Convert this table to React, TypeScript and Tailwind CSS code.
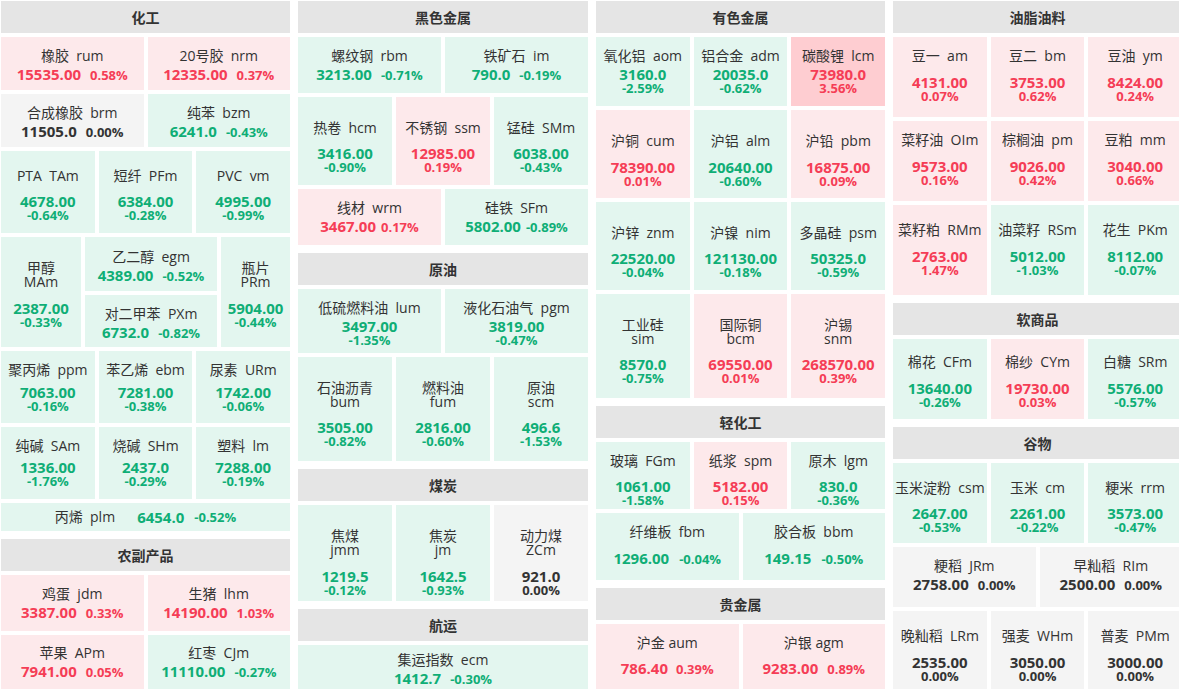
import React from "react";

type Tone = "up" | "down" | "flat" | "hot";
type Variant = "inline" | "stack" | "two" | "row";

interface Quote {
  cn: string;
  code: string;
  price: string;
  pct: string;
  tone: Tone;
  v: Variant;
  pt: string;
  mt?: string;
  gap?: string;
  sp?: string;
  w?: string;
}

interface Row {
  h: string;
  items: Quote[];
}

interface Section {
  title: string;
  rows: Row[];
}

const BG: Record<Tone, string> = {
  up: "bg-[#fde9eb]",
  down: "bg-[#e3f6ef]",
  flat: "bg-[#f4f4f4]",
  hot: "bg-[#fecdd1]",
};

const FG: Record<Tone, string> = {
  up: "text-[#f53d56]",
  down: "text-[#0fae76]",
  flat: "text-[#333]",
  hot: "text-[#f53d56]",
};

function q(
  cn: string,
  code: string,
  price: string,
  pct: string,
  tone: Tone,
  v: Variant,
  pt: string,
  mt = "",
  extra: Partial<Quote> = {}
): Quote {
  return { cn, code, price, pct, tone, v, pt, mt, ...extra };
}

function Tile({ t, className = "" }: { t: Quote; className?: string }) {
  const bg = BG[t.tone];
  const fg = FG[t.tone];
  const label = t.cn + (t.sp ?? "  ") + t.code;

  if (t.v === "row") {
    return (
      <div className={`flex items-center justify-center ${bg} ${className}`}>
        <span className="text-[14px] leading-[20px] text-[#333] whitespace-pre">{label}</span>
        <span className={`ml-[22px] text-[15px] leading-[16px] font-bold ${fg}`}>{t.price}</span>
        <span className={`ml-[10px] text-[13px] leading-[13px] font-bold ${fg}`}>{t.pct}</span>
      </div>
    );
  }

  return (
    <div className={`flex flex-col items-center text-center min-w-0 ${bg} ${t.pt} ${t.w ?? "flex-1"} ${className}`}>
      {t.v === "two" ? (
        <div className="text-[14px] leading-[14px] text-[#333] whitespace-nowrap">
          <div>{t.cn}</div>
          <div>{t.code}</div>
        </div>
      ) : (
        <div className="text-[14px] leading-[20px] text-[#333] whitespace-pre">{label}</div>
      )}
      {t.v === "inline" ? (
        <div className={`flex items-baseline whitespace-nowrap ${t.mt}`}>
          <span className={`text-[15px] leading-[16px] font-bold ${fg}`}>{t.price}</span>
          <span className={`text-[13px] leading-[13px] font-bold ${fg} ${t.gap ?? "ml-[9px]"}`}>{t.pct}</span>
        </div>
      ) : (
        <div className={`flex flex-col items-center whitespace-nowrap ${t.mt}`}>
          <span className={`text-[15px] leading-[16px] font-bold ${fg}`}>{t.price}</span>
          <span className={`text-[13px] leading-[13px] font-bold ${fg}`}>{t.pct}</span>
        </div>
      )}
    </div>
  );
}

function Header({ title }: { title: string }) {
  return (
    <div className="h-[32px] shrink-0 flex items-center justify-center bg-[#e5e5e5] text-[14px] font-bold text-[#333]">
      {title}
    </div>
  );
}

function Rows({ rows }: { rows: Row[] }) {
  return (
    <>
      {rows.map((r, i) => (
        <div key={i} className={`flex gap-1 shrink-0 ${r.h}`}>
          {r.items.map((t) => (
            <Tile key={t.code} t={t} />
          ))}
        </div>
      ))}
    </>
  );
}

function Block({ s, children }: { s: Section; children?: React.ReactNode }) {
  return (
    <div className="flex flex-col gap-1">
      <Header title={s.title} />
      <Rows rows={s.rows} />
      {children}
    </div>
  );
}

const chemTop: Row[] = [
  {
    h: "h-[53px]",
    items: [
      q("橡胶", "rum", "15535.00", "0.58%", "up", "inline", "pt-[9px]"),
      q("20号胶", "nrm", "12335.00", "0.37%", "up", "inline", "pt-[9px]"),
    ],
  },
  {
    h: "h-[53px]",
    items: [
      q("合成橡胶", "brm", "11505.0", "0.00%", "flat", "inline", "pt-[9px]"),
      q("纯苯", "bzm", "6241.0", "-0.43%", "down", "inline", "pt-[9px]"),
    ],
  },
  {
    h: "h-[82px]",
    items: [
      q("PTA", "TAm", "4678.00", "-0.64%", "down", "stack", "pt-[15px]", "mt-[7px]"),
      q("短纤", "PFm", "6384.00", "-0.28%", "down", "stack", "pt-[15px]", "mt-[7px]"),
      q("PVC", "vm", "4995.00", "-0.99%", "down", "stack", "pt-[15px]", "mt-[7px]"),
    ],
  },
];

const chemBottom: Row[] = [
  {
    h: "h-[72px]",
    items: [
      q("聚丙烯", "ppm", "7063.00", "-0.16%", "down", "stack", "pt-[9px]", "mt-[4px]"),
      q("苯乙烯", "ebm", "7281.00", "-0.38%", "down", "stack", "pt-[9px]", "mt-[4px]"),
      q("尿素", "URm", "1742.00", "-0.06%", "down", "stack", "pt-[9px]", "mt-[4px]"),
    ],
  },
  {
    h: "h-[72px]",
    items: [
      q("纯碱", "SAm", "1336.00", "-1.76%", "down", "stack", "pt-[9px]", "mt-[3px]"),
      q("烧碱", "SHm", "2437.0", "-0.29%", "down", "stack", "pt-[9px]", "mt-[3px]"),
      q("塑料", "lm", "7288.00", "-0.19%", "down", "stack", "pt-[9px]", "mt-[3px]"),
    ],
  },
];

const agri: Section = {
  title: "农副产品",
  rows: [
    {
      h: "h-[56px]",
      items: [
        q("鸡蛋", "jdm", "3387.00", "0.33%", "up", "inline", "pt-[9px]"),
        q("生猪", "lhm", "14190.00", "1.03%", "up", "inline", "pt-[9px]"),
      ],
    },
    {
      h: "h-[56px]",
      items: [
        q("苹果", "APm", "7941.00", "0.05%", "up", "inline", "pt-[8px]"),
        q("红枣", "CJm", "11110.00", "-0.27%", "down", "inline", "pt-[8px]"),
      ],
    },
  ],
};

const col2: Section[] = [
  {
    title: "黑色金属",
    rows: [
      {
        h: "h-[56px]",
        items: [
          q("螺纹钢", "rbm", "3213.00", "-0.71%", "down", "inline", "pt-[9px]"),
          q("铁矿石", "im", "790.0", "-0.19%", "down", "inline", "pt-[9px]"),
        ],
      },
      {
        h: "h-[88px]",
        items: [
          q("热卷", "hcm", "3416.00", "-0.90%", "down", "stack", "pt-[21px]", "mt-[7px]"),
          q("不锈钢", "ssm", "12985.00", "0.19%", "up", "stack", "pt-[21px]", "mt-[7px]"),
          q("锰硅", "SMm", "6038.00", "-0.43%", "down", "stack", "pt-[21px]", "mt-[7px]"),
        ],
      },
      {
        h: "h-[56px]",
        items: [
          q("线材", "wrm", "3467.00", "0.17%", "up", "inline", "pt-[9px]", "", { gap: "ml-[5px]" }),
          q("硅铁", "SFm", "5802.00", "-0.89%", "down", "inline", "pt-[9px]", "", { gap: "ml-[5px]" }),
        ],
      },
    ],
  },
  {
    title: "原油",
    rows: [
      {
        h: "h-[64px]",
        items: [
          q("低硫燃料油", "lum", "3497.00", "-1.35%", "down", "stack", "pt-[9px]"),
          q("液化石油气", "pgm", "3819.00", "-0.47%", "down", "stack", "pt-[9px]"),
        ],
      },
      {
        h: "h-[104px]",
        items: [
          q("石油沥青", "bum", "3505.00", "-0.82%", "down", "two", "pt-[24px]", "mt-[10px]"),
          q("燃料油", "fum", "2816.00", "-0.60%", "down", "two", "pt-[24px]", "mt-[10px]"),
          q("原油", "scm", "496.6", "-1.53%", "down", "two", "pt-[24px]", "mt-[10px]"),
        ],
      },
    ],
  },
  {
    title: "煤炭",
    rows: [
      {
        h: "h-[96px]",
        items: [
          q("焦煤", "jmm", "1219.5", "-0.12%", "down", "two", "pt-[24px]", "mt-[11px]"),
          q("焦炭", "jm", "1642.5", "-0.93%", "down", "two", "pt-[24px]", "mt-[11px]"),
          q("动力煤", "ZCm", "921.0", "0.00%", "flat", "two", "pt-[24px]", "mt-[11px]"),
        ],
      },
    ],
  },
  {
    title: "航运",
    rows: [
      {
        h: "h-[48px]",
        items: [q("集运指数", "ecm", "1412.7", "-0.30%", "down", "inline", "pt-[5px]")],
      },
    ],
  },
];

const col3: Section[] = [
  {
    title: "有色金属",
    rows: [
      {
        h: "h-[69px]",
        items: [
          q("氧化铝", "aom", "3160.0", "-2.59%", "down", "stack", "pt-[9px]"),
          q("铝合金", "adm", "20035.0", "-0.62%", "down", "stack", "pt-[9px]"),
          q("碳酸锂", "lcm", "73980.0", "3.56%", "hot", "stack", "pt-[9px]"),
        ],
      },
      {
        h: "h-[88px]",
        items: [
          q("沪铜", "cum", "78390.00", "0.01%", "up", "stack", "pt-[21px]", "mt-[8px]"),
          q("沪铝", "alm", "20640.00", "-0.60%", "down", "stack", "pt-[21px]", "mt-[8px]"),
          q("沪铅", "pbm", "16875.00", "0.09%", "up", "stack", "pt-[21px]", "mt-[8px]"),
        ],
      },
      {
        h: "h-[88px]",
        items: [
          q("沪锌", "znm", "22520.00", "-0.04%", "down", "stack", "pt-[21px]", "mt-[7px]"),
          q("沪镍", "nim", "121130.00", "-0.18%", "down", "stack", "pt-[21px]", "mt-[7px]"),
          q("多晶硅", "psm", "50325.0", "-0.59%", "down", "stack", "pt-[21px]", "mt-[7px]"),
        ],
      },
      {
        h: "h-[104px]",
        items: [
          q("工业硅", "sim", "8570.0", "-0.75%", "down", "two", "pt-[24px]", "mt-[10px]"),
          q("国际铜", "bcm", "69550.00", "0.01%", "up", "two", "pt-[24px]", "mt-[10px]"),
          q("沪锡", "snm", "268570.00", "0.39%", "up", "two", "pt-[24px]", "mt-[10px]"),
        ],
      },
    ],
  },
  {
    title: "轻化工",
    rows: [
      {
        h: "h-[67px]",
        items: [
          q("玻璃", "FGm", "1061.00", "-1.58%", "down", "stack", "pt-[9px]", "mt-[7px]"),
          q("纸浆", "spm", "5182.00", "0.15%", "up", "stack", "pt-[9px]", "mt-[7px]"),
          q("原木", "lgm", "830.0", "-0.36%", "down", "stack", "pt-[9px]", "mt-[7px]"),
        ],
      },
      {
        h: "h-[67px]",
        items: [
          q("纤维板", "fbm", "1296.00", "-0.04%", "down", "inline", "pt-[9px]", "mt-[8px]", { gap: "ml-[10px]" }),
          q("胶合板", "bbm", "149.15", "-0.50%", "down", "inline", "pt-[9px]", "mt-[8px]", { gap: "ml-[10px]" }),
        ],
      },
    ],
  },
  {
    title: "贵金属",
    rows: [
      {
        h: "h-[66px]",
        items: [
          q("沪金", "aum", "786.40", "0.39%", "up", "inline", "pt-[9px]", "mt-[7px]", { sp: " ", gap: "ml-[8px]" }),
          q("沪银", "agm", "9283.00", "0.89%", "up", "inline", "pt-[9px]", "mt-[7px]", { sp: " " }),
        ],
      },
    ],
  },
];

const col4: Section[] = [
  {
    title: "油脂油料",
    rows: [
      {
        h: "h-[80px]",
        items: [
          q("豆一", "am", "4131.00", "0.07%", "up", "stack", "pt-[9px]", "mt-[8px]"),
          q("豆二", "bm", "3753.00", "0.62%", "up", "stack", "pt-[9px]", "mt-[8px]"),
          q("豆油", "ym", "8424.00", "0.24%", "up", "stack", "pt-[9px]", "mt-[8px]"),
        ],
      },
      {
        h: "h-[80px]",
        items: [
          q("菜籽油", "OIm", "9573.00", "0.16%", "up", "stack", "pt-[9px]", "mt-[8px]"),
          q("棕榈油", "pm", "9026.00", "0.42%", "up", "stack", "pt-[9px]", "mt-[8px]"),
          q("豆粕", "mm", "3040.00", "0.66%", "up", "stack", "pt-[9px]", "mt-[8px]"),
        ],
      },
      {
        h: "h-[90px]",
        items: [
          q("菜籽粕", "RMm", "2763.00", "1.47%", "up", "stack", "pt-[15px]", "mt-[8px]"),
          q("油菜籽", "RSm", "5012.00", "-1.03%", "down", "stack", "pt-[15px]", "mt-[8px]"),
          q("花生", "PKm", "8112.00", "-0.07%", "down", "stack", "pt-[15px]", "mt-[8px]"),
        ],
      },
    ],
  },
  {
    title: "软商品",
    rows: [
      {
        h: "h-[80px]",
        items: [
          q("棉花", "CFm", "13640.00", "-0.26%", "down", "stack", "pt-[13px]", "mt-[8px]"),
          q("棉纱", "CYm", "19730.00", "0.03%", "up", "stack", "pt-[13px]", "mt-[8px]"),
          q("白糖", "SRm", "5576.00", "-0.57%", "down", "stack", "pt-[13px]", "mt-[8px]"),
        ],
      },
    ],
  },
  {
    title: "谷物",
    rows: [
      {
        h: "h-[80px]",
        items: [
          q("玉米淀粉", "csm", "2647.00", "-0.53%", "down", "stack", "pt-[15px]", "mt-[7px]"),
          q("玉米", "cm", "2261.00", "-0.22%", "down", "stack", "pt-[15px]", "mt-[7px]"),
          q("粳米", "rrm", "3573.00", "-0.47%", "down", "stack", "pt-[15px]", "mt-[7px]"),
        ],
      },
      {
        h: "h-[60px]",
        items: [
          q("粳稻", "JRm", "2758.00", "0.00%", "flat", "inline", "pt-[9px]"),
          q("早籼稻", "RIm", "2500.00", "0.00%", "flat", "inline", "pt-[9px]"),
        ],
      },
      {
        h: "h-[78px]",
        items: [
          q("晚籼稻", "LRm", "2535.00", "0.00%", "flat", "stack", "pt-[15px]", "mt-[8px]"),
          q("强麦", "WHm", "3050.00", "0.00%", "flat", "stack", "pt-[15px]", "mt-[8px]"),
          q("普麦", "PMm", "3000.00", "0.00%", "flat", "stack", "pt-[15px]", "mt-[8px]"),
        ],
      },
    ],
  },
];

export default function App() {
  return (
    <div className="w-[1179px] h-[689px] overflow-hidden bg-white font-['Open_Sans','Noto_Sans_CJK_SC',sans-serif]">
      <div className="grid grid-cols-[289px_290px_289px_289px] gap-2 pl-[1px] pt-[1px] items-start">
        {/* 化工 + 农副产品 */}
        <div className="flex flex-col gap-2">
          <div className="flex flex-col gap-1">
            <Header title="化工" />
            <Rows rows={chemTop} />
            <div className="flex gap-1 h-[110px] shrink-0">
              <Tile
                className="w-[80px]"
                t={q("甲醇", "MAm", "2387.00", "-0.33%", "down", "two", "pt-[24px]", "mt-[11px]", { w: "w-[80px]" })}
              />
              <div className="flex-1 flex flex-col gap-1">
                <Tile className="h-[53px]" t={q("乙二醇", "egm", "4389.00", "-0.52%", "down", "inline", "pt-[10px]")} />
                <Tile className="h-[53px]" t={q("对二甲苯", "PXm", "6732.0", "-0.82%", "down", "inline", "pt-[9px]")} />
              </div>
              <Tile
                t={q("瓶片", "PRm", "5904.00", "-0.44%", "down", "two", "pt-[24px]", "mt-[11px]", { w: "w-[69px]" })}
              />
            </div>
            <Rows rows={chemBottom} />
            <Tile
              className="h-[28px] shrink-0"
              t={q("丙烯", "plm", "6454.0", "-0.52%", "down", "row", "")}
            />
          </div>
          <Block s={agri} />
        </div>

        {/* 黑色金属 / 原油 / 煤炭 / 航运 */}
        <div className="flex flex-col gap-2">
          {col2.map((s) => (
            <Block key={s.title} s={s} />
          ))}
        </div>

        {/* 有色金属 / 轻化工 / 贵金属 */}
        <div className="flex flex-col gap-2">
          {col3.map((s) => (
            <Block key={s.title} s={s} />
          ))}
        </div>

        {/* 油脂油料 / 软商品 / 谷物 */}
        <div className="flex flex-col gap-2">
          {col4.map((s) => (
            <Block key={s.title} s={s} />
          ))}
        </div>
      </div>
    </div>
  );
}
